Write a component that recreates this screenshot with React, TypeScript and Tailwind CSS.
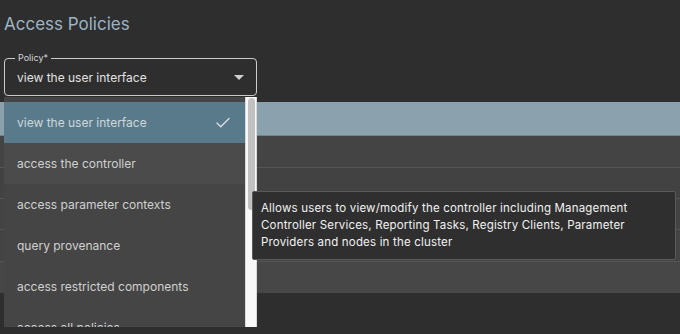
import { Check } from "lucide-react";

const items = [
  "view the user interface",
  "access the controller",
  "access parameter contexts",
  "query provenance",
  "access restricted components",
  "access all policies",
];

function App() {
  return (
    <div
      className="relative h-[334px] w-[680px] overflow-hidden bg-[#2e2e2e]"
      style={{ fontFamily: "Inter, 'Noto Sans', sans-serif" }}
    >
      <h1 className="pl-[4px] pt-[12px] text-[17px] leading-[24px] text-[#9db4c3]">Access Policies</h1>

      {/* select field */}
      <div className="relative ml-[4px] mt-[22px] h-[38px] w-[253px] rounded-[4px] border border-[#c7ccd1]">
        <span className="absolute -top-[7px] left-[10px] bg-[#2e2e2e] px-[3px] text-[9px] leading-[12px] text-[#d6d6d6]">
          Policy*
        </span>
        <div className="flex h-full items-center justify-between pl-[12px] pr-[12px] pt-[1px]">
          <span className="text-[12px] text-[#e2e2e2]">view the user interface</span>
          <span className="h-0 w-0 border-x-[5px] border-t-[5px] border-x-transparent border-t-[#cfcfcf]" />
        </div>
      </div>

      {/* table behind */}
      <div className="mt-[6px] flex flex-col">
        <div className="h-[34px] border-b border-[#6f8590] bg-[#8ba2ae]" />
        <div className="h-[32px] border-b border-[#555] bg-[#444]" />
        <div className="h-[31px] border-b border-[#555] bg-[#424242]" />
        <div className="h-[31px] border-b border-[#555] bg-[#434343]" />
        <div className="h-[32px] border-b border-[#555] bg-[#444]" />
        <div className="h-[31px] bg-[#474747]" />
      </div>

      {/* dropdown menu */}
      <div className="absolute left-[4px] top-[97px] flex h-[230px] w-[253px] overflow-hidden bg-[#454545]">
        <div className="flex-1 pt-[5px]">
          {items.map((it, i) => (
            <div
              key={it}
              className={
                "flex h-[41px] items-center justify-between pl-[13px] pr-[13px] text-[12px] " +
                (i === 0 ? "bg-[#587a8a] text-[#cfd8dc]" : i === 1 ? "bg-[#4b4b4b] text-[#d0d0d0]" : "text-[#d0d0d0]")
              }
            >
              <span>{it}</span>
              {i === 0 && <Check size={18} strokeWidth={1.6} className="text-[#e4e4e4]" />}
            </div>
          ))}
        </div>
        <div className="relative w-[12px] border-x border-[#d9d9d9] bg-[#f8f8f8]">
          <div className="absolute left-[2px] right-[1px] top-[1px] h-[112px] rounded-[4px] bg-[#c1c1c1]" />
        </div>
      </div>

      {/* tooltip */}
      <div className="absolute left-[252px] top-[191px] w-[424px] rounded-[2px] border border-[#5a5a5a] bg-[#2f2f2f] px-[8px] py-[8px] text-[11.5px] leading-[17px] tracking-[0.18px] text-[#f2f2f2]">
        Allows users to view/modify the controller including Management
        <br />
        Controller Services, Reporting Tasks, Registry Clients, Parameter
        <br />
        Providers and nodes in the cluster
      </div>
    </div>
  );
}

export default App;
